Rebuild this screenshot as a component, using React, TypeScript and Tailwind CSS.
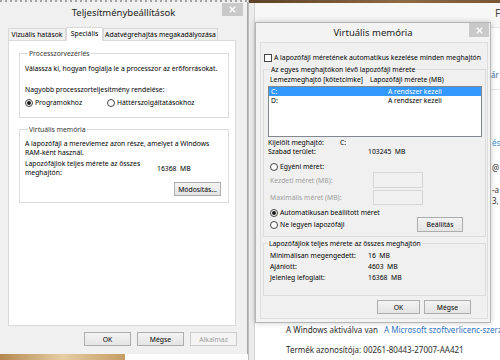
import React from "react";

function Radio({ checked = false, label, className = "" }: { checked?: boolean; label: string; className?: string }) {
  return (
    <div className={"flex items-center " + className}>
      <span className="w-[8px] h-[8px] rounded-full border border-[#444] bg-white flex items-center justify-center shrink-0">
        {checked && <span className="w-[4px] h-[4px] rounded-full bg-[#1a1a1a]" />}
      </span>
      <span className="ml-[2px]">{label}</span>
    </div>
  );
}

function Btn({ children, className = "", disabled = false }: { children: React.ReactNode; className?: string; disabled?: boolean }) {
  return (
    <div
      className={
        "flex items-center justify-center border " +
        (disabled
          ? "border-[#cccccc] bg-[#f4f4f4] text-[#9c9c9c] "
          : "border-[#adadad] bg-gradient-to-b from-[#f3f3f3] to-[#e4e4e4] text-black ") +
        className
      }
    >
      {children}
    </div>
  );
}

function Close({ className = "" }: { className?: string }) {
  return (
    <div className={"flex items-center justify-center bg-[#c9c9c9] " + className}>
      <svg width="7" height="7" viewBox="0 0 7 7">
        <path d="M0.8 0.8L6.2 6.2M6.2 0.8L0.8 6.2" stroke="#ffffff" strokeWidth="1.3" />
      </svg>
    </div>
  );
}

function LeftDialog() {
  return (
    <div className="w-[248px] h-[352px] bg-[#f0f0f0] border-r border-[#a8a8a8] flex flex-col">
      <div className="h-[25px] grid grid-cols-[1fr_auto_1fr] items-start">
        <div />
        <div className="mt-[5px] text-[9.5px] leading-[12px] text-[#222]">Teljesítménybeállítások</div>
        <div className="flex justify-end">
          <Close className="w-[21px] h-[13px] mt-[1px] mr-[4px]" />
        </div>
      </div>
      <div className="h-[13px] ml-[8px] flex items-end">
        <div className="w-[58px] h-[12px] border border-b-0 border-[#d9d9d9] bg-[#f0f0f0] flex items-center justify-center">
          Vizuális hatások
        </div>
        <div className="relative z-10 w-[37px] h-[14px] -mb-[1px] border border-b-0 border-[#d9d9d9] bg-white flex items-start justify-center pt-[1px]">
          Speciális
        </div>
        <div className="w-[115px] h-[12px] border border-b-0 border-[#d9d9d9] bg-[#f0f0f0] flex items-center justify-center">
          Adatvégrehajtás megakadályozása
        </div>
      </div>
      <div className="ml-[8px] w-[228px] h-[286px] bg-white border border-[#d9d9d9] pl-[10px]">
        <fieldset className="mt-[8px] w-[210px] border border-[#dcdcdc] px-[5px] pb-[10px]">
          <legend className="ml-[3px] px-[1px] leading-[9px] text-[#333]">Processzorvezérlés</legend>
          <p className="mt-[6px]">Válassza ki, hogyan foglalja le a processzor az erőforrásokat.</p>
          <p className="mt-[12px]">Nagyobb processzorteljesítmény rendelése:</p>
          <div className="mt-[4px] flex">
            <Radio checked label="Programokhoz" className="w-[82px]" />
            <Radio label="Háttérszolgáltatásokhoz" />
          </div>
        </fieldset>
        <fieldset className="mt-[7px] w-[210px] border border-[#dcdcdc] px-[5px] pb-[6px]">
          <legend className="ml-[3px] px-[1px] leading-[9px] text-[#333]">Virtuális memória</legend>
          <p className="mt-[5px]">
            A lapozófájl a merevlemez azon része, amelyet a Windows
            <br />
            RAM-ként használ.
          </p>
          <div className="mt-[2px] flex items-center">
            <div className="w-[132px]">
              Lapozófájlok teljes mérete az összes
              <br />
              meghajtón:
            </div>
            <div>16368&nbsp;&nbsp;MB</div>
          </div>
          <div className="mt-[5px] flex justify-end pr-[2px]">
            <Btn className="w-[47px] h-[14px]">Módosítás...</Btn>
          </div>
        </fieldset>
      </div>
      <div className="mt-[6px] flex justify-end gap-[6px] pr-[10px]">
        <Btn className="w-[47px] h-[14px]">OK</Btn>
        <Btn className="w-[47px] h-[14px]">Mégse</Btn>
        <Btn disabled className="w-[47px] h-[14px]">Alkalmaz</Btn>
      </div>
    </div>
  );
}

function SystemWindow() {
  return (
    <div className="flex-1 h-full flex flex-col border-l border-[#bdbdbd]">
      <div className="h-[3px] bg-gradient-to-r from-[#5e4128] via-[#8d6b44] to-[#6a4a2b]" />
      <div className="flex-1 flex">
        <div className="w-[6px] bg-[#ececec] border-r border-[#d4d4d4]" />
        <div className="flex-1 flex flex-col bg-white">
          <div className="h-[25px] bg-[#f7f7f7] border-b border-[#e3e3e3] pl-[240px] pt-[4px] text-[10px] leading-[12px] text-[#444]">
            F
          </div>
          <div className="h-[62px] border-b border-[#e6e6e6] pl-[236px] pt-[42px] text-[8px] leading-[10px] text-[#2e6da4]">
            ár
          </div>
          <div className="h-[60px] pl-[237px] pt-[48px] text-[8px] leading-[10px] text-[#3d8fd1]">és</div>
          <div className="h-[60px] pl-[237px] pt-[13px] text-[8px] leading-[10px] text-[#333] flex flex-col">
            <span>@</span>
            <span className="mt-[12px]">-a</span>
            <span className="mt-[1px]">3,</span>
          </div>
          <div className="flex-1" />
          <div className="h-[37px] pl-[31px] pt-[2px] text-[8px] leading-[10px] text-[#2b2b2b] whitespace-nowrap">
            <div className="flex">
              <span className="w-[98px]">A Windows aktiválva van</span>
              <span className="text-[#2f74c0]">A Microsoft szoftverlicenc-szerződési feltételei</span>
            </div>
            <div className="mt-[10px]">Termék azonosítója: 00261-80443-27007-AA421</div>
          </div>
        </div>
      </div>
    </div>
  );
}

function VmDialog() {
  return (
    <div className="absolute left-[255px] top-[22px] w-[236px] h-[301px] bg-[#f3f3f3] border border-[#b5b5b5] shadow-[0_0_6px_rgba(0,0,0,0.2)] flex flex-col">
      <div className="h-[19px] grid grid-cols-[1fr_auto_1fr] items-start">
        <div />
        <div className="mt-[4px] text-[9.5px] leading-[12px] text-[#222]">Virtuális memória</div>
        <div className="flex justify-end">
          <Close className="w-[20px] h-[14px] mr-[1px]" />
        </div>
      </div>
      <div className="ml-[4px] mr-[2px] mb-[3px] flex-1 bg-[#f0f0f0] border border-[#dedede] flex flex-col">
        <div className="mt-[10px] pl-[3px] flex items-center">
          <span className="w-[8px] h-[8px] border border-[#444] bg-white shrink-0" />
          <span className="ml-[2px]">A lapozófájl méretének automatikus kezelése minden meghajtón</span>
        </div>
        <fieldset className="mt-[3px] ml-[2px] w-[223px] border border-[#dcdcdc] pl-[4px] pb-[4px]">
          <legend className="ml-[2px] px-[1px] leading-[9px]">Az egyes meghajtókon lévő lapozófájl mérete</legend>
          <div className="mt-[1px] pl-[2px] flex">
            <span className="w-[100px]">Lemezmeghajtó [kötetcímke]</span>
            <span>Lapozófájl mérete (MB)</span>
          </div>
          <div className="mt-[2px] w-[214px] h-[51px] border border-[#828790] bg-white">
            <div className="h-[9px] bg-[#3399ff] text-white flex items-center pl-[2px]">
              <span className="w-[117px]">C:</span>
              <span>A rendszer kezeli</span>
            </div>
            <div className="h-[9px] flex items-center pl-[2px]">
              <span className="w-[117px]">D:</span>
              <span>A rendszer kezeli</span>
            </div>
          </div>
          <div className="mt-[1px] flex">
            <span className="w-[72px]">Kijelölt meghajtó:</span>
            <span>C:</span>
          </div>
          <div className="flex">
            <span className="w-[100px]">Szabad terület:</span>
            <span>103245&nbsp;&nbsp;MB</span>
          </div>
          <Radio label="Egyéni méret:" className="mt-[6px] pl-[2px]" />
          <div className="mt-[1px] h-[16px] flex items-center">
            <span className="w-[105px] pl-[2px] text-[#9d9d9d]">Kezdeti méret (MB):</span>
            <span className="w-[50px] h-[16px] border border-[#d6d6d6] bg-[#f0f0f0]" />
          </div>
          <div className="mt-[2px] h-[15px] flex items-center">
            <span className="w-[105px] pl-[2px] text-[#9d9d9d]">Maximális méret (MB):</span>
            <span className="w-[50px] h-[15px] border border-[#d6d6d6] bg-[#f0f0f0]" />
          </div>
          <Radio checked label="Automatikusan beállított méret" className="mt-[3px] pl-[2px]" />
          <div className="flex items-center pl-[2px]">
            <Radio label="Ne legyen lapozófájl" />
            <Btn className="ml-auto mr-[22px] w-[46px] h-[15px]">Beállítás</Btn>
          </div>
        </fieldset>
        <fieldset className="mt-[2px] ml-[2px] w-[223px] border border-[#dcdcdc] pl-[6px] pb-[12px] leading-[11px]">
          <legend className="-ml-[2px] px-[1px] leading-[9px]">Lapozófájlok teljes mérete az összes meghajtón</legend>
          <div className="mt-[2px] flex">
            <span className="w-[98px]">Minimálisan megengedett:</span>
            <span>16&nbsp;&nbsp;MB</span>
          </div>
          <div className="flex">
            <span className="w-[98px]">Ajánlott:</span>
            <span>4603&nbsp;&nbsp;MB</span>
          </div>
          <div className="flex">
            <span className="w-[98px]">Jelenleg lefoglalt:</span>
            <span>16368&nbsp;&nbsp;MB</span>
          </div>
        </fieldset>
        <div className="mt-[4px] flex justify-end gap-[4px] pr-[16px]">
          <Btn className="w-[43px] h-[14px]">OK</Btn>
          <Btn className="w-[47px] h-[14px]">Mégse</Btn>
        </div>
      </div>
    </div>
  );
}

export default function App() {
  return (
    <div className="relative w-[500px] h-[360px] overflow-hidden bg-white font-['Noto_Sans',sans-serif] text-[6.8px] leading-[9px] text-black flex">
      <div className="w-[249px] h-full flex flex-col">
        <div className="h-[2px] bg-[repeating-linear-gradient(90deg,#7a7a7a_0px,#7a7a7a_2px,#e4e4e4_2px,#e4e4e4_5px)] opacity-70" />
        <LeftDialog />
        <div className="flex-1 flex">
          <div className="w-[125px] bg-gradient-to-r from-[#b4884f] via-[#e6cda3] to-[#c69c64]" />
          <div className="flex-1 bg-white" />
        </div>
      </div>
      <SystemWindow />
      <VmDialog />
    </div>
  );
}
